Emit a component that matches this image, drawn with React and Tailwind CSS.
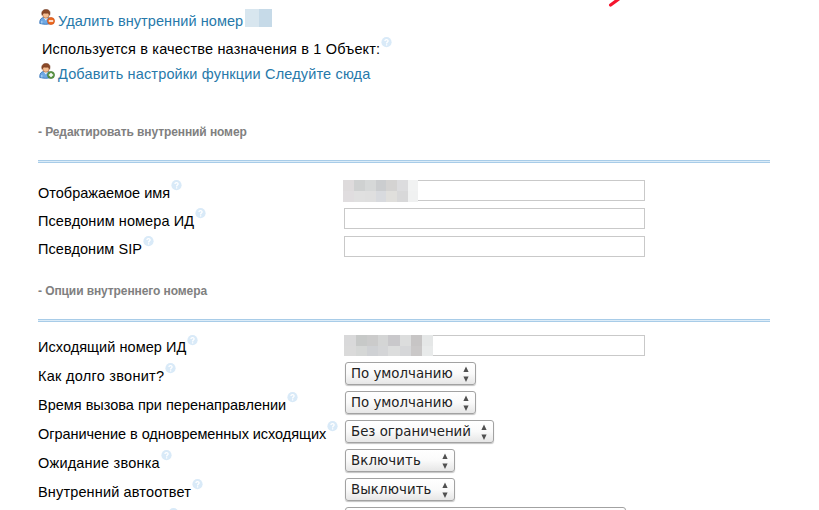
import React from "react";

function Help() {
  return (
    <svg className="mt-px ml-px h-[11px] w-[11px] shrink-0" viewBox="0 0 11 11">
      <circle cx="5.5" cy="5.2" r="5.1" fill="#d9eaf8" />
      <path d="M3.9 4C4 2.2 7.2 2.3 7.1 4.1C7.1 5.1 5.6 5.1 5.6 6.4M5.6 7.3V8.4" fill="none" stroke="#fff" strokeWidth="1.3" />
    </svg>
  );
}

function UserIcon({ add }) {
  return (
    <svg className="ml-px h-4 w-4 shrink-0" viewBox="0 0 16 16">
      <path d="M.8 14.5C.4 10.5 2.3 8.5 5.2 8.4H8.5C11.4 8.7 12.7 10.7 12.4 14.5Q6.5 16.2.8 14.5Z" fill="#6fa8e3" stroke="#3c78bb" strokeWidth=".9" />
      <path d="M4.7 8.7L6.8 11.6L8.9 8.7Z" fill="#edf5fc" />
      <path d="M2.8 14.5V12M10 12V14" stroke="#a9d0f5" strokeWidth="1.2" />
      <ellipse cx="6.9" cy="5.5" rx="3.3" ry="3.7" fill="#f4bd91" stroke="#a76134" strokeWidth=".6" />
      <path d="M3.1 6.3C2 2.9 3.8.4 7 .5C10.6.5 11.7 3 10.6 6.3L9.3 4.1C7.5 4.5 5.7 4.2 4.6 3.9Z" fill="#8c4a28" stroke="#6c351d" strokeWidth=".5" />
      <circle cx="12" cy="12" r="3.5" fill={add ? "#619b48" : "#ed6b21"} stroke={add ? "#3f7730" : "#c84b13"} strokeWidth=".7" />
      <path d={add ? "M9.9 12H14.1M12 9.9V14.1" : "M9.8 12H14.2"} stroke="#fff" strokeWidth="1.5" />
    </svg>
  );
}

function Row({ label, textClass = "mt-[5px]", rowClass, children }) {
  return (
    <div className={`flex items-start ${rowClass}`}>
      <div className="flex w-[306px] shrink-0 items-start whitespace-nowrap">
        <span className={`shrink-0 leading-[18px] ${textClass}`}>{label}</span>
        <Help />
      </div>
      {children}
    </div>
  );
}

function Mosaic({ cells, className }) {
  return (
    <div className={`absolute grid ${className}`}>
      {cells.map((c, i) => (
        <span key={i} style={{ backgroundColor: c }} />
      ))}
    </div>
  );
}

function Field({ children }) {
  return <div className="relative mt-px h-[21px] w-[301px] border border-[#c9c9c9] bg-white">{children}</div>;
}

function Select({ text, className, textClass = "" }) {
  return (
    <div className={`ml-px flex h-[23px] shrink-0 items-start justify-between rounded-[3px] border border-[#a2a2a2] bg-linear-to-b from-white via-[#fafafa] to-[#e6e6e6] pr-[6px] pl-[5px] font-['DejaVu_Sans',sans-serif] text-[13.33px] text-[#222] shadow-[0_1px_1px_#c4c4c4] ${className}`}>
      <span className={`mt-[2px] leading-[18px] whitespace-nowrap ${textClass}`}>{text}</span>
      <svg className="mt-[3px] h-4 w-[6px] shrink-0" viewBox="0 0 6 16">
        <path d="M3 .5L5.6 6H.4ZM3 16L5.6 10.5H.4Z" fill="#505050" />
      </svg>
    </div>
  );
}

function Section({ title, className }) {
  return (
    <div className={className}>
      <h2 className="h-4 text-[12px] leading-4 font-bold tracking-[-0.09px] whitespace-nowrap text-[#808080]">{title}</h2>
      <div className="mt-[20px] h-[3px] w-[732px] border-y border-[#a8cce8] bg-[#dcecf8]" />
    </div>
  );
}

export default function App() {
  return (
    <main className="relative h-[510px] w-[819px] overflow-hidden bg-white pl-[38px] font-['Liberation_Sans',Arial,sans-serif] text-[14.5px] text-black">
      <svg className="absolute top-0 left-[608px] h-[7px] w-[14px]" viewBox="0 0 14 7">
        <path d="M2.6 5L10.5-.8" stroke="#f5142d" strokeWidth="3.2" strokeLinecap="round" />
      </svg>
      <div className="flex h-[36px] items-start pt-[9px] text-[#2779aa]">
        <UserIcon />
        <a className="mt-[3px] ml-[3px] w-[187px] shrink-0 leading-[18px] tracking-[0.07px] whitespace-nowrap">Удалить внутренний номер</a>
        <span className="flex h-[18px] w-[27px]"><i className="w-[14px] bg-[#d8e6ef]" /><i className="flex-1 bg-[#c6dae8]" /></span>
      </div>
      <div className="flex h-[27px] items-start pl-1 whitespace-nowrap">
        <span className="mt-[4px] shrink-0 leading-[18px] tracking-[0.17px]">Используется в качестве назначения в 1 Объект:</span>
        <Help />
      </div>
      <div className="flex h-[61px] items-start text-[#2779aa]">
        <UserIcon add />
        <a className="mt-[2px] ml-[3px] leading-[18px] tracking-[0.16px] whitespace-nowrap">Добавить настройки функции Следуйте сюда</a>
      </div>
      <Section title="- Редактировать внутренний номер" className="h-[55px]" />
      <Row label="Отображаемое имя" rowClass="h-[28px]">
        <Field>
          <Mosaic className="-top-px -left-[2px] h-[22px] w-[75px] grid-cols-[11px_11px_11px_10px_11px_11px_10px] grid-rows-2" cells={["#dedbdc", "#cfd1d1", "#d6d8d8", "#cbcdcf", "#d4d3d2", "#dcdcde", "#f1f2f2", "#e0dddf", "#e0e0e0", "#dfdfdf", "#d8dade", "#e0dfdc", "#d8d8d9", "#f0f1f1"]} />
        </Field>
      </Row>
      <Row label="Псевдоним номера ИД" textClass="mt-[5px] tracking-[0.09px]" rowClass="h-[28px]"><Field /></Row>
      <Row label="Псевдоним SIP" textClass="mt-[5px] tracking-[0.05px]" rowClass="h-[48px]"><Field /></Row>
      <Section title="- Опции внутреннего номера" className="h-[51px]" />
      <Row label="Исходящий номер ИД" textClass="mt-[4px] tracking-[0.05px]" rowClass="h-[28px]">
        <Field>
          <Mosaic className="-top-px -left-px h-[21px] w-[89px] grid-cols-[12px_11px_11px_10px_12px_11px_11px_11px] grid-rows-2" cells={["#d9d9da", "#c7c9c8", "#cbcbcb", "#d4d5d5", "#c9c8cb", "#dcdddd", "#c7c5c5", "#e5e7e7", "#dadada", "#d5d7d6", "#cfd1d4", "#d4d5d7", "#dcdddd", "#d6d7d9", "#cac8c8", "#e8eaea"]} />
        </Field>
      </Row>
      <Row label="Как долго звонит?" textClass="mt-[5px] tracking-[0.27px]" rowClass="h-[29px]"><Select text="По умолчанию" className="w-[131px]" /></Row>
      <Row label="Время вызова при перенаправлении" rowClass="h-[29px]"><Select text="По умолчанию" className="w-[131px]" /></Row>
      <Row label="Ограничение в одновременных исходящих" textClass="mt-[5px] tracking-[-0.05px]" rowClass="h-[29px]"><Select text="Без ограничений" className="w-[149px]" /></Row>
      <Row label="Ожидание звонка" textClass="mt-[5px] tracking-[0.2px]" rowClass="h-[29px]"><Select text="Включить" textClass="tracking-[0.1px]" className="w-[110px]" /></Row>
      <Row label="Внутренний автоответ" textClass="mt-[5px] tracking-[0.15px]" rowClass="h-[29px]"><Select text="Выключить" textClass="tracking-[0.1px]" className="w-[110px]" /></Row>
      <div className="flex h-[29px]"><div className="w-[129px]" /><Help /><div className="w-[165px]" /><Select text="" className="w-[281px]" /></div>
    </main>
  );
}
